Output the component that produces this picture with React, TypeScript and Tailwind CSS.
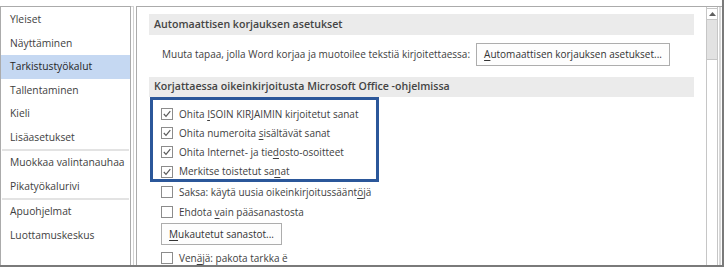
import React from 'react';

const navGroups: string[][] = [
  ['Yleiset', 'Näyttäminen', 'Tarkistustyökalut', 'Tallentaminen', 'Kieli', 'Lisäasetukset'],
  ['Muokkaa valintanauhaa', 'Pikatyökalurivi'],
  ['Apuohjelmat', 'Luottamuskeskus'],
];

// label split around the mnemonic letter: [before, key, after]
type Opt = { parts: [string, string, string]; checked: boolean };

const highlighted: Opt[] = [
  { parts: ['Ohita ', 'I', 'SOIN KIRJAIMIN kirjoitetut sanat'], checked: true },
  { parts: ['Ohita numeroita ', 's', 'isältävät sanat'], checked: true },
  { parts: ['Ohita Internet- ja tie', 'd', 'osto-osoitteet'], checked: true },
  { parts: ['Merkitse toistetut sa', 'n', 'at'], checked: true },
];

const rest: Opt[] = [
  { parts: ['Saksa: käytä uusia oikeinkirjoitussäänt', 'ö', 'jä'], checked: false },
  { parts: ['Ehdota ', 'v', 'ain pääsanastosta'], checked: false },
];

function Check({ checked }: { checked: boolean }) {
  return (
    <span className="w-[12px] h-[12px] border border-[#8c8c8c] bg-white flex items-center justify-center shrink-0">
      {checked && (
        <svg width="10" height="10" viewBox="0 0 10 10">
          <path d="M1.8 5 L4 7.3 L8.3 2.2" fill="none" stroke="#5a5a5a" strokeWidth="1.2" />
        </svg>
      )}
    </span>
  );
}

function Label({ parts }: { parts: [string, string, string] }) {
  return (
    <span className="whitespace-nowrap">
      {parts[0]}
      <span className="underline underline-offset-2">{parts[1]}</span>
      {parts[2]}
    </span>
  );
}

function OptionRow({ opt, className = '' }: { opt: Opt; className?: string }) {
  return (
    <div className={`h-[19.2px] flex items-center gap-[6px] pl-[12px] ${className}`}>
      <Check checked={opt.checked} />
      <Label parts={opt.parts} />
    </div>
  );
}

export default function App() {
  return (
    <div
      className="w-[724px] h-[267px] bg-white overflow-hidden text-[10px] text-[#3e3e3e] border-r-2 border-b-2 border-[#7a7a7a] flex pt-[6px]"
      style={{ fontFamily: '"Open Sans", "Noto Sans", sans-serif' }}
    >
      {/* left navigation */}
      <div className="w-[131px] shrink-0 border-x border-t border-[#ababab] flex flex-col pt-px text-[10.3px]">
        {navGroups.map((group, gi) => (
          <div key={gi} className={gi > 0 ? 'border-t-2 border-[#e3e3e3] mx-[1px]' : ''}>
            {group.map((item) => (
              <div
                key={item}
                className={`h-[23.5px] flex items-center whitespace-nowrap ${gi > 0 ? 'pl-[8px]' : 'pl-[9px]'} ${
                  item === 'Tarkistustyökalut' ? 'bg-[#c5d8f2] text-[#262626]' : ''
                }`}
              >
                {item}
              </div>
            ))}
          </div>
        ))}
      </div>
      <div className="w-[3px] shrink-0 border-r border-t border-[#d2d2d2]" />
      <div className="w-[2px] shrink-0" />

      {/* settings pane */}
      <div className="flex-1 border-l border-t border-[#ababab] flex">
        <div className="flex-1 px-[12px] pt-[7px] relative">
          <div className="h-[21px] bg-[#ebebeb] flex items-center pl-[5px] text-[10.6px] font-semibold text-[#444] whitespace-nowrap">
            Automaattisen korjauksen asetukset
          </div>
          <div className="h-[23px] mt-[8px] flex items-center pl-[13px] whitespace-nowrap">
            <span>Muuta tapaa, jolla Word korjaa ja muotoilee tekstiä kirjoitettaessa:</span>
            <button className="ml-auto mr-[24px] h-[23px] w-[194px] border border-[#adadad] bg-[#fdfdfd] text-[#333]">
              <Label parts={['', 'A', 'utomaattisen korjauksen asetukset...']} />
            </button>
          </div>
          <div className="h-[20px] mt-[11px] bg-[#ebebeb] flex items-center pl-[5px] text-[10.6px] font-semibold text-[#444] whitespace-nowrap">
            Korjattaessa oikeinkirjoitusta Microsoft Office -ohjelmissa
          </div>
          <div className="pt-[7.5px]">
            {highlighted.map((o) => (
              <OptionRow key={o.parts.join('')} opt={o} />
            ))}
            <OptionRow opt={rest[0]} className="mt-[1.5px]" />
            <OptionRow opt={rest[1]} className="mt-[0.8px]" />
            <div className="pl-[12px] mt-[1.5px]">
              <button className="h-[22px] w-[121px] border border-[#adadad] bg-[#fdfdfd] text-[#333]">
                <Label parts={['', 'M', 'ukautetut sanastot...']} />
              </button>
            </div>
            <OptionRow opt={{ parts: ['Ven', 'ä', 'jä: pakota tarkka ë'], checked: false }} className="mt-[3px]" />
          </div>

          {/* highlight frame over the first four options */}
          <div className="absolute left-[13px] top-[89.5px] w-[229px] h-[85px] border-[3px] border-[#2b579a] pointer-events-none" />
        </div>

        {/* scrollbar */}
        <div className="w-[12px] shrink-0 border-x border-[#c6c6c6] flex flex-col pt-[1px]">
          <div className="h-[12px] border-y border-[#c6c6c6] -mx-px border-x bg-white flex items-center justify-center">
            <svg width="7" height="4" viewBox="0 0 7 4">
              <path d="M0 4 L3.5 0 L7 4 Z" fill="#606060" />
            </svg>
          </div>
          <div className="h-[40px] bg-[#e2e2e2] border-b border-[#c6c6c6]" />
          <div className="flex-1 bg-white" />
        </div>
        <div className="w-[1px] shrink-0" />
        <div className="w-[2px] shrink-0 bg-[#d9d9d9]" />
        <div className="w-[1px] shrink-0" />
      </div>
    </div>
  );
}
